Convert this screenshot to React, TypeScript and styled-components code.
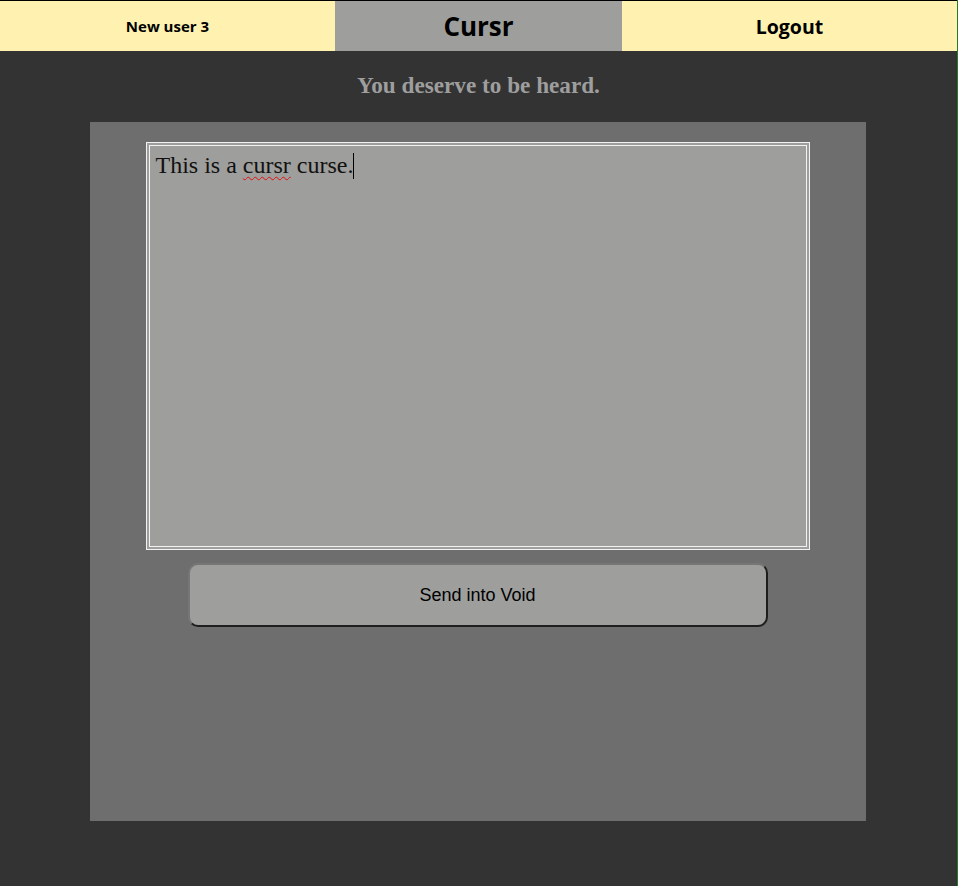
import React from "react";
import styled, { createGlobalStyle } from "styled-components";

const GlobalStyle = createGlobalStyle`
  html, body {
    margin: 0;
    padding: 0;
    background: #333333;
  }
  #root {
    min-height: 886px;
  }
`;

const Page = styled.div`
  min-height: 886px;
  background: #333333;
  border-right: 1px solid #2b7a2b;
  box-sizing: border-box;
`;

const Header = styled.header`
  display: grid;
  grid-template-columns: 35% 30% 35%;
  height: 50px;
  border-top: 1px solid #000;
  font-family: "Open Sans", "Liberation Sans", sans-serif;
  font-weight: 700;
  color: #000;
`;

const HeaderCell = styled.div<{ $accent?: boolean; $size: number }>`
  display: flex;
  align-items: center;
  justify-content: center;
  background: ${(p) => (p.$accent ? "#9e9e9c" : "#fff2b0")};
  font-size: ${(p) => p.$size}px;
`;

const Tagline = styled.h2`
  margin: 0;
  padding: 21px 0 0;
  height: 51px;
  box-sizing: border-box;
  text-align: center;
  font-family: "Liberation Serif", serif;
  font-weight: 700;
  font-size: 23.2px;
  color: #9e9e9e;
`;

const Panel = styled.main`
  width: 776px;
  height: 699px;
  margin: 20px auto 0;
  transform: translateX(-1px);
  background: #6e6e6e;
  display: flex;
  flex-direction: column;
  align-items: center;
  padding-top: 20px;
  box-sizing: border-box;
  gap: 13px;
`;

const Editor = styled.div`
  width: 664px;
  height: 408px;
  box-sizing: border-box;
  border: 4px double #f2f2f2;
  background: #9e9e9c;
  padding: 6px 6px;
  font-family: "Liberation Serif", serif;
  font-size: 24px;
  color: #111;
  outline: none;
`;

const Misspelled = styled.span`
  text-decoration: underline wavy #e01010;
  text-decoration-thickness: 1px;
  text-underline-offset: 3px;
`;

const Caret = styled.span`
  display: inline-block;
  width: 1px;
  height: 26px;
  background: #000;
  vertical-align: -6px;
`;

const SendButton = styled.button`
  width: 580px;
  height: 64px;
  background: #9e9e9c;
  border-style: solid;
  border-width: 2px;
  border-color: #767676 #1e1e1e #1e1e1e #767676;
  border-radius: 10px;
  font-family: "Liberation Sans", Arial, sans-serif;
  font-size: 18px;
  color: #000;
  cursor: pointer;
`;

export default function App() {
  return (
    <>
      <GlobalStyle />
      <Page>
        <Header>
          <HeaderCell $size={15}>New user 3</HeaderCell>
          <HeaderCell $accent $size={26}>Cursr</HeaderCell>
          <HeaderCell $size={19.5}>Logout</HeaderCell>
        </Header>
        <Tagline>You deserve to be heard.</Tagline>
        <Panel>
          <Editor role="textbox" aria-multiline="true">
            This is a <Misspelled>cursr</Misspelled> curse.<Caret />
          </Editor>
          <SendButton>Send into Void</SendButton>
        </Panel>
      </Page>
    </>
  );
}
